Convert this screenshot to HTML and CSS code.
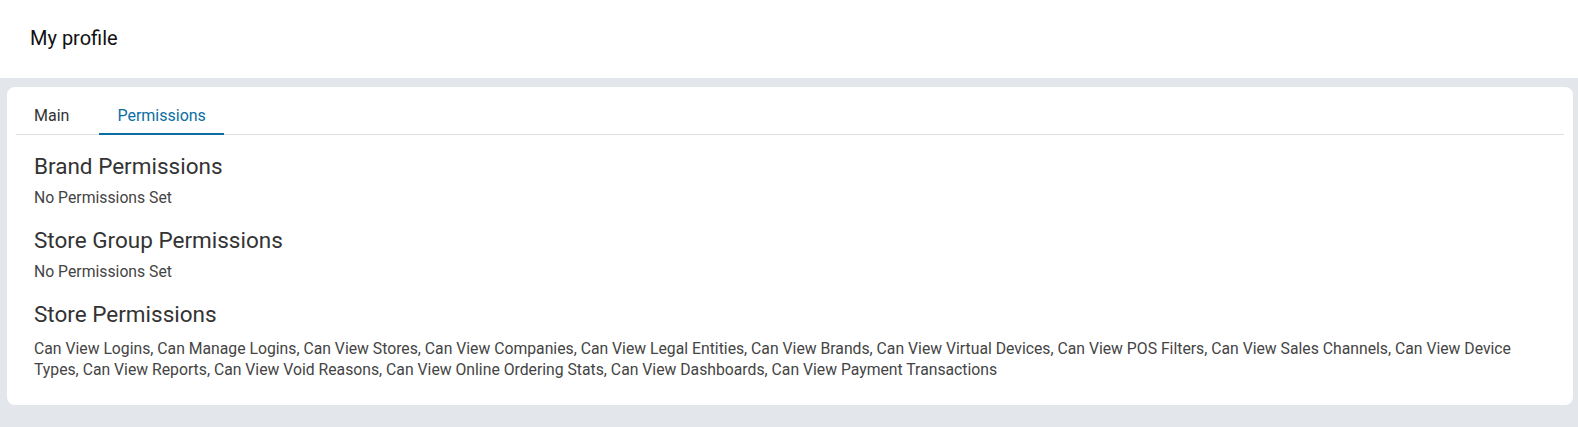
FILE: index.html
```html
<!DOCTYPE html>
<html>
<head>
<meta charset="utf-8">
<link rel="stylesheet" href="styles.css">
</head>
<body>
<header class="page-header">
  <h1 class="page-title">My profile</h1>
</header>
<main class="content">
  <section class="card">
    <nav class="tabs">
      <div class="tab">Main</div>
      <div class="tab tab-active">Permissions</div>
    </nav>
    <div class="panel">
      <h2 class="section-title">Brand Permissions</h2>
      <p class="section-text">No Permissions Set</p>
      <h2 class="section-title">Store Group Permissions</h2>
      <p class="section-text">No Permissions Set</p>
      <h2 class="section-title">Store Permissions</h2>
      <p class="section-text last">Can View Logins, Can Manage Logins, Can View Stores, Can View Companies, Can View Legal Entities, Can View Brands, Can View Virtual Devices, Can View POS Filters, Can View Sales Channels, Can View Device Types, Can View Reports, Can View Void Reasons, Can View Online Ordering Stats, Can View Dashboards, Can View Payment Transactions</p>
    </div>
  </section>
</main>
</body>
</html>
```
FILE: styles.css
```css
* { box-sizing: border-box; }
html, body { margin: 0; padding: 0; }
body {
  font-family: Roboto, "Noto Sans", sans-serif;
  background: #e3e6ea;
  height: 427px;
  overflow: hidden;
}
.page-header {
  background: #fff;
  height: 78px;
  display: flex;
  align-items: center;
  padding-left: 30px;
}
.page-title {
  margin: 0;
  font-size: 20px;
  font-weight: 400;
  color: #111;
  padding-bottom: 3px;
}
.content {
  padding: 9px 5px 0 7px;
}
.card {
  background: #fff;
  border-radius: 8px;
  padding: 0 9px 25px 9px;
}
.tabs {
  display: flex;
  gap: 12px;
  border-bottom: 1px solid #dcdfe3;
  height: 48px;
}
.tab {
  font-size: 16px;
  color: #333;
  padding: 19px 18px 0 18px;
  height: 48px;
}
.tab-active {
  color: #0b6ea3;
  border-bottom: 2px solid #0b6ea3;
  margin-bottom: -1px;
}
.panel {
  padding: 18px 18px 0 18px;
}
.section-title {
  margin: 0;
  font-size: 22.5px;
  font-weight: 400;
  color: #333;
  line-height: 27px;
}
.section-text {
  margin: 7px 0 19px 0;
  font-size: 15.75px;
  color: #444;
  line-height: 21px;
}
.section-text.last {
  margin: 10px 0 0 0;
}
```
